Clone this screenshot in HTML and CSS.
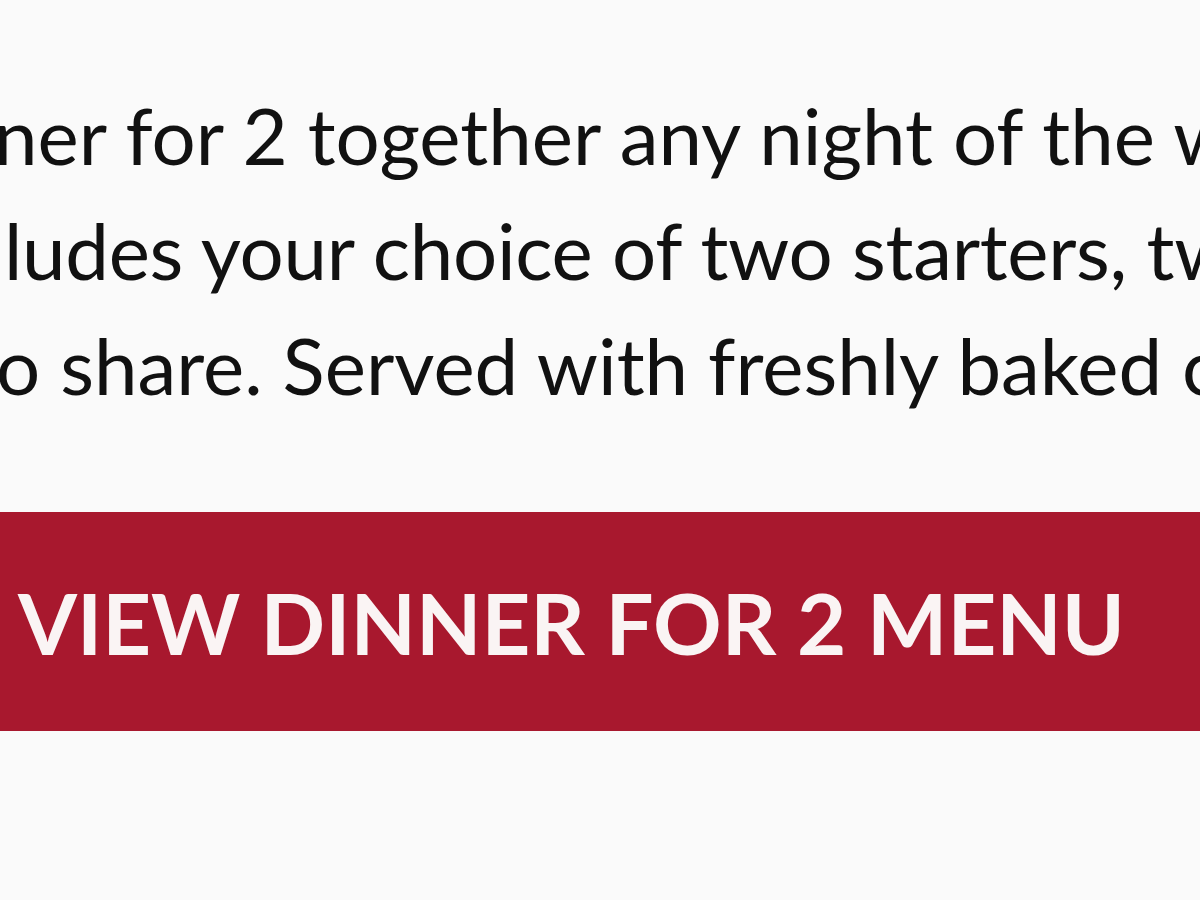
FILE: index.html
```html
<!DOCTYPE html>
<html lang="en">
<head>
    <meta charset="UTF-8">
    <meta name="viewport" content="width=device-width, initial-scale=1.0">
    <title>Dinner for 2</title>
    <link rel="stylesheet" href="styles.css">
</head>
<body>
    <div class="offer">
        <div class="copy">
            <div class="line line-1">ner for 2 together any night of the week</div>
            <div class="line line-2">ludes your choice of two starters, two</div>
            <div class="line line-3">o share. Served with freshly baked ciabatta</div>
        </div>
        <a class="menu-btn" href="#">VIEW DINNER FOR 2 MENU</a>
    </div>
</body>
</html>
```

FILE: styles.css
```css
html, body {
    margin: 0;
    padding: 0;
    background-color: #fafafa;
}
body {
    width: 1200px;
    height: 900px;
    overflow: hidden;
    font-family: Lato, "Open Sans", sans-serif;
}
.offer {
    display: flex;
    flex-direction: column;
}
.copy {
    display: flex;
    flex-direction: column;
    padding-top: 78px;
    color: #111;
    font-size: 78px;
    line-height: 115px;
}
.line {
    white-space: nowrap;
}
.line-1 {
    margin-left: -6px;
}
.line-2 {
    margin-left: 4px;
    letter-spacing: -0.3px;
}
.line-3 {
    margin-left: -4px;
}
.menu-btn {
    display: flex;
    align-items: center;
    height: 219px;
    margin-top: 89px;
    padding-left: 18px;
    background-color: #a8182e;
    color: #faf4f4;
    font-size: 85px;
    font-weight: 700;
    text-decoration: none;
    white-space: nowrap;
}
```
